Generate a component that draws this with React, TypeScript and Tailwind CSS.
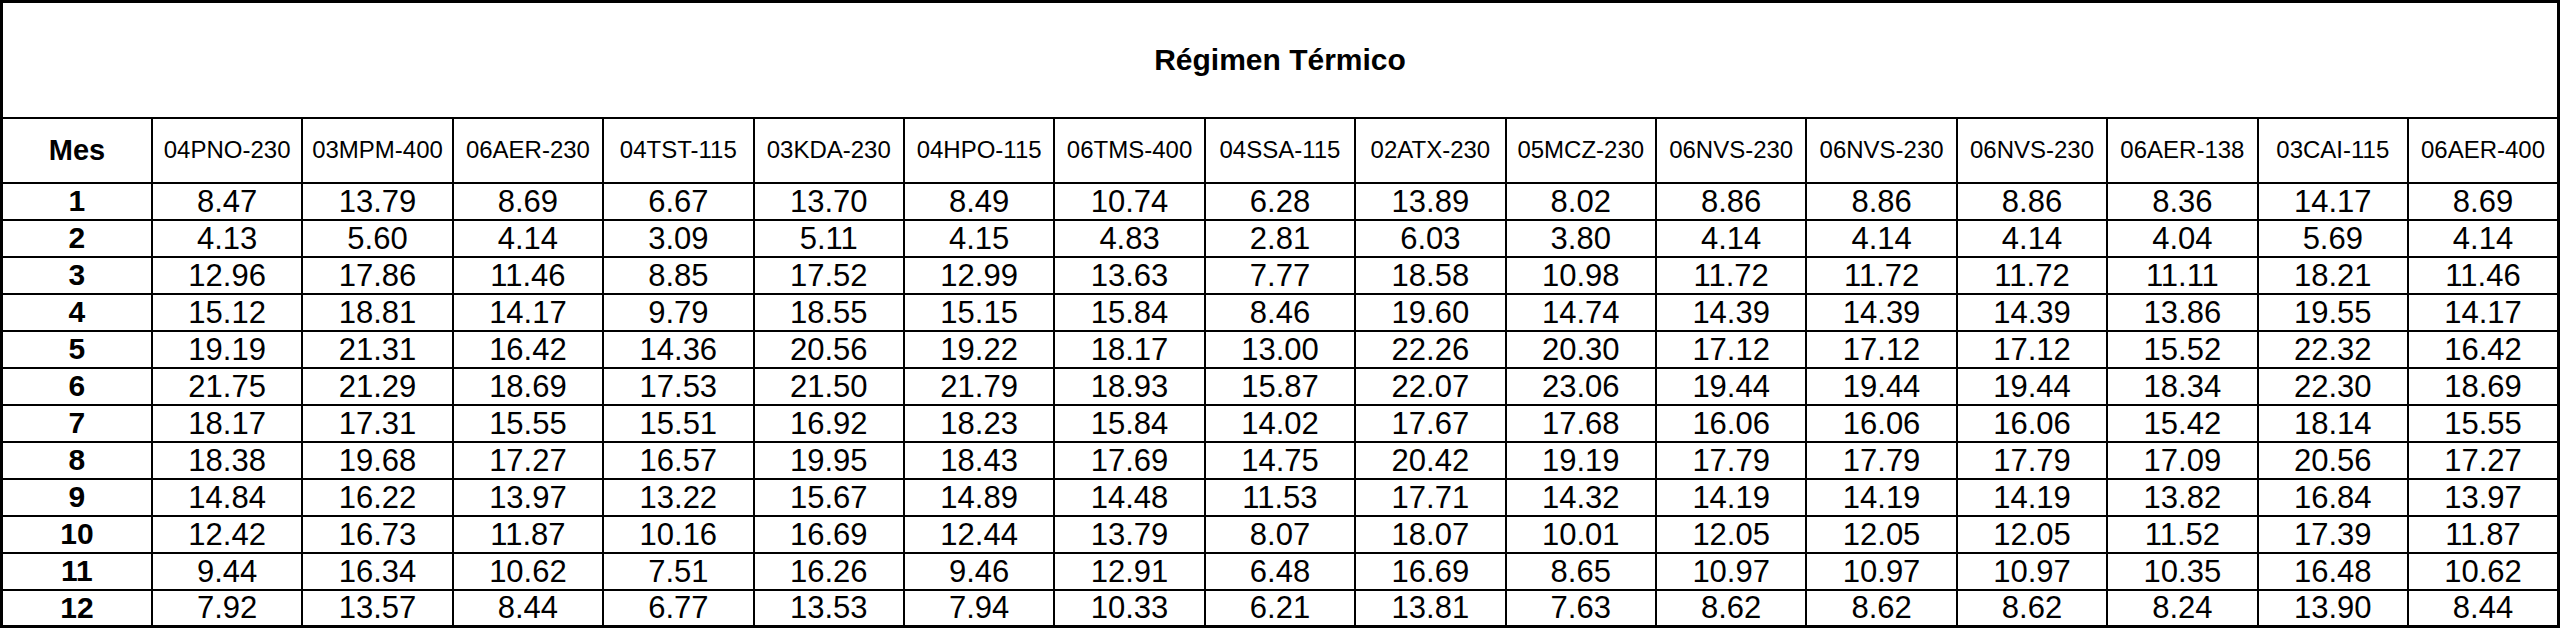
import React from 'react';

const stations = [
  '04PNO-230', '03MPM-400', '06AER-230', '04TST-115', '03KDA-230', '04HPO-115', '06TMS-400', '04SSA-115',
  '02ATX-230', '05MCZ-230', '06NVS-230', '06NVS-230', '06NVS-230', '06AER-138', '03CAI-115', '06AER-400',
];

const rows: string[][] = [
  ['8.47', '13.79', '8.69', '6.67', '13.70', '8.49', '10.74', '6.28', '13.89', '8.02', '8.86', '8.86', '8.86', '8.36', '14.17', '8.69'],
  ['4.13', '5.60', '4.14', '3.09', '5.11', '4.15', '4.83', '2.81', '6.03', '3.80', '4.14', '4.14', '4.14', '4.04', '5.69', '4.14'],
  ['12.96', '17.86', '11.46', '8.85', '17.52', '12.99', '13.63', '7.77', '18.58', '10.98', '11.72', '11.72', '11.72', '11.11', '18.21', '11.46'],
  ['15.12', '18.81', '14.17', '9.79', '18.55', '15.15', '15.84', '8.46', '19.60', '14.74', '14.39', '14.39', '14.39', '13.86', '19.55', '14.17'],
  ['19.19', '21.31', '16.42', '14.36', '20.56', '19.22', '18.17', '13.00', '22.26', '20.30', '17.12', '17.12', '17.12', '15.52', '22.32', '16.42'],
  ['21.75', '21.29', '18.69', '17.53', '21.50', '21.79', '18.93', '15.87', '22.07', '23.06', '19.44', '19.44', '19.44', '18.34', '22.30', '18.69'],
  ['18.17', '17.31', '15.55', '15.51', '16.92', '18.23', '15.84', '14.02', '17.67', '17.68', '16.06', '16.06', '16.06', '15.42', '18.14', '15.55'],
  ['18.38', '19.68', '17.27', '16.57', '19.95', '18.43', '17.69', '14.75', '20.42', '19.19', '17.79', '17.79', '17.79', '17.09', '20.56', '17.27'],
  ['14.84', '16.22', '13.97', '13.22', '15.67', '14.89', '14.48', '11.53', '17.71', '14.32', '14.19', '14.19', '14.19', '13.82', '16.84', '13.97'],
  ['12.42', '16.73', '11.87', '10.16', '16.69', '12.44', '13.79', '8.07', '18.07', '10.01', '12.05', '12.05', '12.05', '11.52', '17.39', '11.87'],
  ['9.44', '16.34', '10.62', '7.51', '16.26', '9.46', '12.91', '6.48', '16.69', '8.65', '10.97', '10.97', '10.97', '10.35', '16.48', '10.62'],
  ['7.92', '13.57', '8.44', '6.77', '13.53', '7.94', '10.33', '6.21', '13.81', '7.63', '8.62', '8.62', '8.62', '8.24', '13.90', '8.44'],
];

export default function App() {
  return (
    <div className="w-[2560px] h-[631px] bg-white text-black font-['Liberation_Sans',Arial,sans-serif]">
      <table className="w-full table-fixed border-collapse border-[3px] border-black">
        <tbody>
          <tr className="h-[116px]">
            <td colSpan={17} className="border-2 border-black text-center align-middle text-[30px] font-bold leading-none">
              Régimen Térmico
            </td>
          </tr>
          <tr className="h-[65px]">
            <td className="border-2 border-black text-center align-middle text-[29px] font-bold leading-none">Mes</td>
            {stations.map((s, i) => (
              <td key={i} className="border-2 border-black text-center align-middle text-[24px] leading-none">
                {s}
              </td>
            ))}
          </tr>
          {rows.map((r, ri) => (
            <tr key={ri} className="h-[37px]">
              <td className="border-2 border-black text-center align-middle text-[30px] font-bold leading-none">{ri + 1}</td>
              {r.map((v, ci) => (
                <td key={ci} className="border-2 border-black text-center align-middle text-[31px] leading-none">
                  {v}
                </td>
              ))}
            </tr>
          ))}
        </tbody>
      </table>
    </div>
  );
}
